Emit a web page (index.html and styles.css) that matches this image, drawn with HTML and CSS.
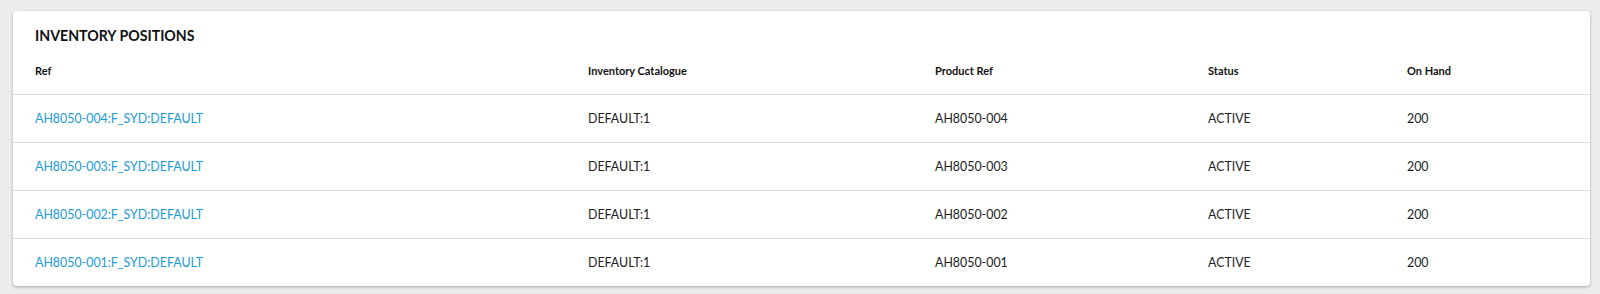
FILE: index.html
```html
<!DOCTYPE html>
<html>
<head>
<meta charset="utf-8">
<link rel="stylesheet" href="styles.css">
</head>
<body>
<div class="card">
  <h2 class="title">INVENTORY POSITIONS</h2>
  <table class="grid">
    <colgroup>
      <col class="c-ref"><col class="c-cat"><col class="c-prod"><col class="c-status"><col class="c-hand">
    </colgroup>
    <thead>
      <tr><th>Ref</th><th>Inventory Catalogue</th><th>Product Ref</th><th>Status</th><th>On Hand</th></tr>
    </thead>
    <tbody>
      <tr><td><a href="#">AH8050-004:F_SYD:DEFAULT</a></td><td>DEFAULT:1</td><td>AH8050-004</td><td>ACTIVE</td><td>200</td></tr>
      <tr><td><a href="#">AH8050-003:F_SYD:DEFAULT</a></td><td>DEFAULT:1</td><td>AH8050-003</td><td>ACTIVE</td><td>200</td></tr>
      <tr><td><a href="#">AH8050-002:F_SYD:DEFAULT</a></td><td>DEFAULT:1</td><td>AH8050-002</td><td>ACTIVE</td><td>200</td></tr>
      <tr><td><a href="#">AH8050-001:F_SYD:DEFAULT</a></td><td>DEFAULT:1</td><td>AH8050-001</td><td>ACTIVE</td><td>200</td></tr>
    </tbody>
  </table>
</div>
</body>
</html>
```
FILE: styles.css
```css
html, body {
  margin: 0;
  background: #ececec;
}
body {
  padding: 11px 10px 8px 13px;
  font-family: Lato, "Open Sans", sans-serif;
  color: #222;
}
.card {
  background: #fff;
  border-radius: 4px;
  box-shadow: 0 1px 3px rgba(0,0,0,0.3);
  overflow: hidden;
}
.title {
  margin: 0;
  padding: 16px 22px 0;
  height: 32px;
  box-sizing: border-box;
  font-size: 14.2px;
  line-height: 18px;
  font-weight: 700;
  color: #111;
}
.grid {
  width: 100%;
  border-collapse: collapse;
  table-layout: fixed;
}
.c-ref { width: 553px; }
.c-cat { width: 347px; }
.c-prod { width: 273px; }
.c-status { width: 199px; }
.grid th {
  text-align: left;
  font-size: 11px;
  font-weight: 700;
  color: #111;
  padding: 5px 0 0 22px;
  height: 51px;
  box-sizing: border-box;
  vertical-align: middle;
  border-bottom: 1px solid #dcdcdc;
}
.grid td {
  font-size: 12.4px;
  padding: 0 0 0 22px;
  height: 48px;
  box-sizing: border-box;
  vertical-align: middle;
  border-bottom: 1px solid #dcdcdc;
}
.grid tbody tr:last-child td {
  border-bottom: none;
}
.grid a {
  color: #1a9bd7;
  text-decoration: none;
}
```
